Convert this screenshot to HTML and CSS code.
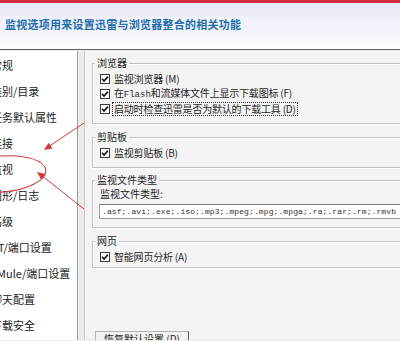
FILE: index.html
```html
<!DOCTYPE html>
<html lang="zh-CN">
<head>
<meta charset="utf-8">
<title>监视</title>
<link rel="stylesheet" href="styles.css">
</head>
<body>
<div class="topbar"></div>
<header class="header">
  <h1 class="title">监视选项用来设置迅雷与浏览器整合的相关功能</h1>
</header>
<div class="main">
  <nav class="nav">
    <ul class="nav-list">
      <li>常规</li>
      <li>类别/目录</li>
      <li>任务默认属性</li>
      <li>连接</li>
      <li>监视</li>
      <li>图形/日志</li>
      <li>高级</li>
      <li>BT/端口设置</li>
      <li>eMule/端口设置</li>
      <li>聊天配置</li>
      <li>下载安全</li>
    </ul>
  </nav>
  <section class="panel">
    <div class="group g1">
      <div class="legend">浏览器</div>
      <div class="rows">
        <div class="row"><svg class="cb" width="10" height="10" viewBox="0 0 10 10"><rect x="0.5" y="0.5" width="9" height="9" fill="#fff" stroke="#3a3a3a"/><path d="M2 4.8 L4 7 L8 2.6" stroke="#111" stroke-width="1.6" fill="none"/></svg><span class="lbl">监视浏览器 (M)</span></div>
        <div class="row"><svg class="cb" width="10" height="10" viewBox="0 0 10 10"><rect x="0.5" y="0.5" width="9" height="9" fill="#fff" stroke="#3a3a3a"/><path d="M2 4.8 L4 7 L8 2.6" stroke="#111" stroke-width="1.6" fill="none"/></svg><span class="lbl">在<span class="mono">Flash</span>和流媒体文件上显示下载图标 (F)</span></div>
        <div class="row"><svg class="cb" width="10" height="10" viewBox="0 0 10 10"><rect x="0.5" y="0.5" width="9" height="9" fill="#fff" stroke="#3a3a3a"/><path d="M2 4.8 L4 7 L8 2.6" stroke="#111" stroke-width="1.6" fill="none"/></svg><span class="lbl focus">启动时检查迅雷是否为默认的下载工具 (D)</span></div>
      </div>
    </div>
    <div class="group g2">
      <div class="legend">剪贴板</div>
      <div class="row"><svg class="cb" width="10" height="10" viewBox="0 0 10 10"><rect x="0.5" y="0.5" width="9" height="9" fill="#fff" stroke="#3a3a3a"/><path d="M2 4.8 L4 7 L8 2.6" stroke="#111" stroke-width="1.6" fill="none"/></svg><span class="lbl">监视剪贴板 (B)</span></div>
    </div>
    <div class="group g3">
      <div class="legend">监视文件类型</div>
      <div class="field-label">监视文件类型:</div>
      <div class="textbox">.asf;.avi;.exe;.iso;.mp3;.mpeg;.mpg;.mpga;.ra;.rar;.rm;.rmvb</div>
    </div>
    <div class="group g4">
      <div class="legend">网页</div>
      <div class="row"><svg class="cb" width="10" height="10" viewBox="0 0 10 10"><rect x="0.5" y="0.5" width="9" height="9" fill="#fff" stroke="#3a3a3a"/><path d="M2 4.8 L4 7 L8 2.6" stroke="#111" stroke-width="1.6" fill="none"/></svg><span class="lbl">智能网页分析 (A)</span></div>
    </div>
    <button class="btn">恢复默认设置 (D)</button>
  </section>
</div>
<svg class="marks" width="400" height="341" viewBox="0 0 400 341">
  <ellipse cx="2" cy="174" rx="44" ry="18" transform="rotate(-5 2 174)" fill="none" stroke="#d23a3a" stroke-width="1"/>
  <line x1="84" y1="123" x2="48" y2="147" stroke="#d23a3a" stroke-width="1"/>
  <polygon points="44,150 52.5,148.5 48.7,142.7" fill="#d23a3a"/>
  <line x1="84" y1="209" x2="41" y2="175" stroke="#d23a3a" stroke-width="1"/>
  <polygon points="37,172 45.4,174.1 41.2,179.7" fill="#d23a3a"/>
</svg>
</body>
</html>
```
FILE: styles.css
```css
html, body {
  margin: 0;
  padding: 0;
}
body {
  width: 400px;
  height: 341px;
  overflow: hidden;
  position: relative;
  background: #ececec;
  font-family: "Noto Sans CJK SC", "Liberation Sans", sans-serif;
  color: #1e1e1e;
}
.topbar {
  height: 3px;
  background: #d22f3c;
}
.header {
  height: 47px;
  box-sizing: border-box;
  padding: 14px 0 0 5px;
  background: linear-gradient(#e6e9f9, #f3f4fc 50%, #fdfdfd);
  border-bottom: 1px solid #5e5e5e;
}
.title {
  margin: 0;
  font-size: 11px;
  line-height: 14px;
  font-weight: bold;
  letter-spacing: 0.25px;
  color: #1f6dab;
  white-space: nowrap;
}
.main {
  display: flex;
  height: 290px;
  padding-top: 1px;
  box-sizing: border-box;
}
.nav {
  width: 77px;
  flex: none;
  background: #fff;
  border-right: 1px solid #9a9a9a;
  overflow: hidden;
}
.nav-list {
  list-style: none;
  margin: 0 0 0 -9px;
  padding: 1px 0 0 0;
}
.nav-list li {
  height: 26px;
  line-height: 26px;
  font-size: 11px;
  white-space: nowrap;
  color: #222;
}
.panel {
  flex: 1;
  margin-left: 6px;
  border-left: 1px solid #cacaca;
  background: #f4f4f4;
  padding: 12px 0 0 7px;
  overflow: hidden;
  display: flex;
  flex-direction: column;
  align-items: flex-start;
}
.group {
  align-self: stretch;
  margin-right: -20px;
  border: 1px solid #c3c3c3;
  box-shadow: inset 1px 1px 0 #fff, 0 1px 0 #fff;
  padding-left: 7px;
}
.legend {
  width: fit-content;
  height: 14px;
  line-height: 14px;
  margin: -8px 0 0 -5px;
  padding: 0 2px;
  background: #f4f4f4;
  font-size: 10px;
  color: #222;
}
.g1 .rows {
  padding-top: 1px;
  padding-bottom: 7px;
}
.g2 {
  margin-top: 13px;
  padding-bottom: 7px;
}
.g2 .row, .g4 .row {
  margin-top: 1px;
}
.g3 {
  margin-top: 12px;
  padding-bottom: 8px;
}
.g4 {
  margin-top: 13px;
  padding-bottom: 3px;
}
.row {
  display: flex;
  align-items: center;
  height: 15px;
  white-space: nowrap;
}
.cb {
  flex: none;
  display: block;
}
.lbl {
  margin-left: 4px;
  font-size: 10px;
  line-height: 12px;
  letter-spacing: -0.2px;
  color: #1e1e1e;
}
.mono {
  font-family: "Liberation Mono", monospace;
  font-size: 9px;
  letter-spacing: 0;
}
.focus {
  outline: 1px dotted #333;
  outline-offset: 0;
  margin-left: 3px;
  padding: 0 1px;
}
.field-label {
  margin-top: 1px;
  height: 12px;
  line-height: 12px;
  font-size: 10px;
  color: #1e1e1e;
}
.textbox {
  margin-top: 4px;
  margin-left: -1px;
  height: 15px;
  box-sizing: border-box;
  border: 1px solid #9c9c9c;
  border-top-color: #7a7a7a;
  border-right: none;
  background: #fff;
  padding-left: 2px;
  font-family: "Liberation Mono", monospace;
  font-size: 8px;
  line-height: 13px;
  letter-spacing: 0.1px;
  color: #333;
  white-space: nowrap;
  overflow: hidden;
}
.btn {
  margin: 63px 0 0 3px;
  width: 94px;
  height: 24px;
  flex: none;
  box-sizing: border-box;
  border: 1px solid #b4b4b4;
  border-right-color: #555;
  background: #f2f2f2;
  padding: 0;
  font-family: "Noto Sans CJK SC", sans-serif;
  font-size: 10px;
  line-height: 14px;
  color: #222;
  text-align: center;
  display: flex;
  align-items: flex-start;
  justify-content: center;
}
.marks {
  position: absolute;
  left: 0;
  top: 0;
  pointer-events: none;
}
```
